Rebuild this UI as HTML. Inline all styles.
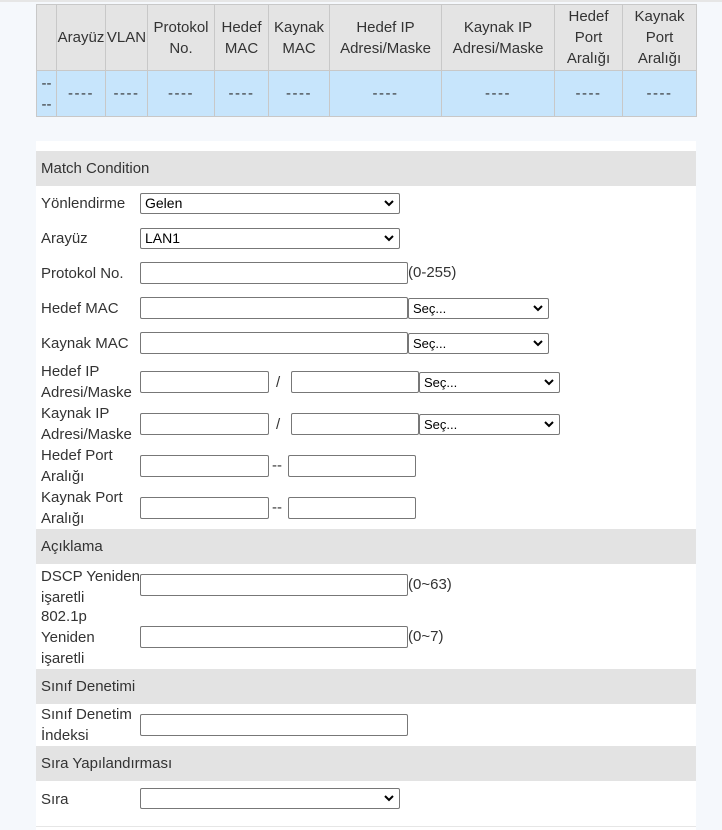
<!DOCTYPE html>
<html><head><meta charset="utf-8">
<style>
*{box-sizing:border-box;margin:0;padding:0}
body{width:722px;height:830px;background:#f5f8fc;font-family:"Liberation Sans",sans-serif;font-size:15px;color:#333;position:relative;overflow:hidden}
.topline{position:absolute;left:0;top:0;width:722px;height:2px;background:#e6e6e6}
table{position:absolute;left:36px;top:4px;border-collapse:collapse;width:660px;table-layout:fixed}
td,th{border:1px solid #c8c8c8;text-align:center;font-weight:normal;font-size:15px;line-height:21px;color:#333;padding:0}
th{background:#e4e4e4;height:66px}
td{background:#c7e5fc;height:46px}
td.d{letter-spacing:1.5px}
.panel{position:absolute;left:36px;top:141px;width:660px;height:689px;background:#fff}
.sec{position:absolute;left:36px;width:660px;height:35px;background:#e3e3e3;padding-left:5px;line-height:35px;font-size:15px}
.lbl{position:absolute;left:41px;line-height:21px;font-size:15px}
.in{position:absolute;height:22px;border:1px solid #777;border-radius:2px;background:#fff}
.sel{position:absolute;height:21px;border:1px solid #777;border-radius:2px;background:#fff;font-size:13px;color:#000;line-height:19px;padding-left:4px}
.sel svg{position:absolute;right:5px;top:6px}
.t{position:absolute;font-size:15px;line-height:20px}
.bot{position:absolute;left:36px;top:826px;width:660px;height:1px;background:#e6e6e6}
</style></head><body>
<div class="topline"></div>
<table>
<colgroup><col style="width:20px"><col style="width:49px"><col style="width:42px"><col style="width:67px"><col style="width:54px"><col style="width:61px"><col style="width:112px"><col style="width:113px"><col style="width:68px"><col style="width:74px"></colgroup>
<tr><th></th><th>Arayüz</th><th>VLAN</th><th>Protokol<br>No.</th><th>Hedef<br>MAC</th><th>Kaynak<br>MAC</th><th>Hedef IP<br>Adresi/Maske</th><th>Kaynak IP<br>Adresi/Maske</th><th>Hedef<br>Port<br>Aralığı</th><th>Kaynak<br>Port<br>Aralığı</th></tr>
<tr><td>--<br>--</td><td class="d">----</td><td class="d">----</td><td class="d">----</td><td class="d">----</td><td class="d">----</td><td class="d">----</td><td class="d">----</td><td class="d">----</td><td class="d">----</td></tr>
</table>
<div class="panel"></div>
<div class="bot"></div>

<div class="sec" style="top:151px">Match Condition</div>
<div class="lbl" style="top:193px">Yönlendirme</div>
<div class="sel" style="left:140px;top:193px;width:260px;font-size:14px">Gelen<svg width="10" height="7"><path d="M1 1l4 4 4-4" stroke="#000" stroke-width="2" fill="none"/></svg></div>
<div class="lbl" style="top:228px">Arayüz</div>
<div class="sel" style="left:140px;top:228px;width:260px;font-size:14px">LAN1<svg width="10" height="7"><path d="M1 1l4 4 4-4" stroke="#000" stroke-width="2" fill="none"/></svg></div>
<div class="lbl" style="top:263px">Protokol No.</div>
<div class="in" style="left:140px;top:262px;width:268px"></div><div class="t" style="left:408px;top:263px">(0-255)</div>
<div class="lbl" style="top:298px">Hedef MAC</div>
<div class="in" style="left:140px;top:297px;width:268px"></div>
<div class="sel" style="left:408px;top:298px;width:141px">Seç...<svg width="10" height="7"><path d="M1 1l4 4 4-4" stroke="#000" stroke-width="2" fill="none"/></svg></div>
<div class="lbl" style="top:333px">Kaynak MAC</div>
<div class="in" style="left:140px;top:332px;width:268px"></div>
<div class="sel" style="left:408px;top:333px;width:141px">Seç...<svg width="10" height="7"><path d="M1 1l4 4 4-4" stroke="#000" stroke-width="2" fill="none"/></svg></div>

<div class="lbl" style="top:361px">Hedef IP<br>Adresi/Maske</div>
<div class="in" style="left:140px;top:371px;width:129px"></div><div class="t" style="left:276px;top:373px">/</div>
<div class="in" style="left:291px;top:371px;width:128px"></div>
<div class="sel" style="left:419px;top:372px;width:141px">Seç...<svg width="10" height="7"><path d="M1 1l4 4 4-4" stroke="#000" stroke-width="2" fill="none"/></svg></div>
<div class="lbl" style="top:403px">Kaynak IP<br>Adresi/Maske</div>
<div class="in" style="left:140px;top:413px;width:129px"></div><div class="t" style="left:276px;top:415px">/</div>
<div class="in" style="left:291px;top:413px;width:128px"></div>
<div class="sel" style="left:419px;top:414px;width:141px">Seç...<svg width="10" height="7"><path d="M1 1l4 4 4-4" stroke="#000" stroke-width="2" fill="none"/></svg></div>
<div class="lbl" style="top:445px">Hedef Port<br>Aralığı</div>
<div class="in" style="left:140px;top:455px;width:129px"></div><div class="t" style="left:272px;top:456px">--</div>
<div class="in" style="left:288px;top:455px;width:128px"></div>
<div class="lbl" style="top:487px">Kaynak Port<br>Aralığı</div>
<div class="in" style="left:140px;top:497px;width:129px"></div><div class="t" style="left:272px;top:498px">--</div>
<div class="in" style="left:288px;top:497px;width:128px"></div>

<div class="sec" style="top:529px">Açıklama</div>
<div class="lbl" style="top:566px">DSCP Yeniden<br>işaretli</div>
<div class="in" style="left:140px;top:574px;width:268px"></div><div class="t" style="left:408px;top:575px">(0~63)</div>
<div class="lbl" style="top:606px">802.1p<br>Yeniden<br>işaretli</div>
<div class="in" style="left:140px;top:626px;width:268px"></div><div class="t" style="left:408px;top:627px">(0~7)</div>

<div class="sec" style="top:669px">Sınıf Denetimi</div>
<div class="lbl" style="top:704px">Sınıf Denetim<br>İndeksi</div>
<div class="in" style="left:140px;top:714px;width:268px"></div>

<div class="sec" style="top:746px">Sıra Yapılandırması</div>
<div class="lbl" style="top:789px">Sıra</div>
<div class="sel" style="left:140px;top:788px;width:260px"><svg width="10" height="7"><path d="M1 1l4 4 4-4" stroke="#000" stroke-width="2" fill="none"/></svg></div>
</body></html>
